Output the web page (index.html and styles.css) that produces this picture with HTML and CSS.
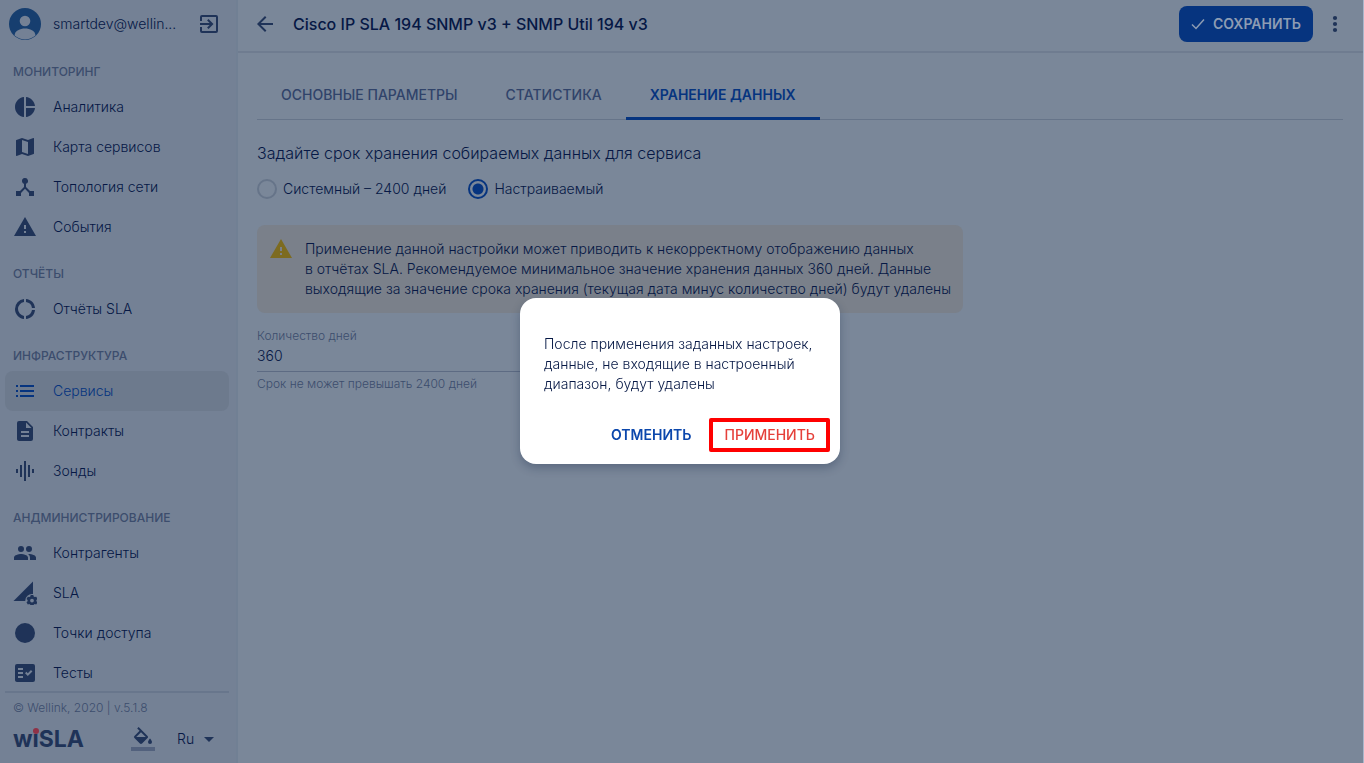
FILE: index.html
```html
<!DOCTYPE html>
<html lang="ru">
<head>
<meta charset="utf-8">
<title>wiSLA</title>
<link rel="stylesheet" href="styles.css">
</head>
<body>
<div class="app">
  <aside class="sidebar">
    <div class="user">
      <svg class="avatar" viewBox="0 0 32 32"><defs><clipPath id="disc"><circle cx="16" cy="16" r="16"/></clipPath></defs><circle cx="16" cy="16" r="16" fill="#163e6f"/><g clip-path="url(#disc)"><circle cx="16" cy="13" r="5.3" fill="#748195"/><path d="M5.500 27.500C6 22.500 11 20.500 16 20.500s10 2 10.500 7Q16 35.500 5.500 27.500z" fill="#748195"/></g></svg>
      <span class="user-name">smartdev@wellin...</span>
      <button class="icon-button" aria-label="Выйти"><svg class="icon" viewBox="0 0 24 24"><path d="M19 3H5a2 2 0 0 0-2 2v4h2V5h14v14H5v-4H3v4a2 2 0 0 0 2 2h14a2 2 0 0 0 2-2V5a2 2 0 0 0-2-2zM3 11v2h9.670l-2.580 2.590L11.500 17l5-5-5-5-1.410 1.410L12.670 11z"/></svg></button>
    </div>
    <nav class="nav">
      <h2 class="nav-title">МОНИТОРИНГ</h2>
      <a class="nav-item" href="#"><svg class="icon" viewBox="0 0 24 24"><path d="M11 2v20C5.900 21.500 2 17.200 2 12S5.900 2.500 11 2zm2 0v9h9c-.5-4.700-4.200-8.500-9-9zm0 11v9c4.700-.5 8.500-4.200 9-9z"/></svg>Аналитика</a>
      <a class="nav-item" href="#"><svg class="icon" viewBox="0 0 24 24"><path d="M20.500 3l-.16.03L15 5.100 9 3 3.360 4.900a.5.5 0 0 0-.36.480V20.500c0 .28.220.5.5.5l.16-.03L9 18.900l6 2.100 5.640-1.900a.5.5 0 0 0 .36-.480V3.500a.5.5 0 0 0-.5-.5zM15 19l-6-2.110V5l6 2.110z"/></svg>Карта сервисов</a>
      <a class="nav-item" href="#"><svg class="icon" viewBox="0 0 24 24"><path d="M17 16l-4-4V8.820A3 3 0 1 0 9 6c0 1.300.84 2.400 2 2.820V12l-4 4H3v5h5v-3.050l4-4.200 4 4.200V21h5v-5z"/></svg>Топология сети</a>
      <a class="nav-item" href="#"><svg class="icon" viewBox="0 0 24 24"><path d="M1 21h22L12 2zm12-3h-2v-2h2zm0-4h-2v-4h2z"/></svg>События</a>
      <h2 class="nav-title">ОТЧЁТЫ</h2>
      <a class="nav-item" href="#"><svg class="icon" viewBox="0 0 24 24"><path d="M11 5.080V2A10 10 0 0 0 2 12c0 5.200 3.950 9.450 9 10v-3.080A7 7 0 0 1 5 12a7 7 0 0 1 6-6.920zM18.970 11H22c-.47-5-4-8.530-9-9v3.080A7 7 0 0 1 18.970 11zM13 18.920V22c5-.47 8.530-4 9-9h-3.030A7 7 0 0 1 13 18.920z"/></svg>Отчёты SLA</a>
      <h2 class="nav-title">ИНФРАСТРУКТУРА</h2>
      <a class="nav-item nav-item-active" href="#" aria-current="page"><svg class="icon" viewBox="0 0 24 24"><path d="M3 13h2v-2H3zm0 5h2v-2H3zM3 8h2V6H3zm4 5h14v-2H7zm0 5h14v-2H7zM7 6v2h14V6z"/></svg>Сервисы</a>
      <a class="nav-item" href="#"><svg class="icon" viewBox="0 0 24 24"><path d="M14 2H6a2 2 0 0 0-2 2v16c0 1.100.9 2 2 2h12a2 2 0 0 0 2-2V8zm2 16H8v-2h8zm0-4H8v-2h8zm-3-5V3.500L18.500 9z"/></svg>Контракты</a>
      <a class="nav-item" href="#"><svg class="icon" viewBox="0 0 24 24"><path d="M7 18h2V6H7zm4 4h2V2h-2zm-8-8h2v-4H3zm12 4h2V6h-2zm4-8v4h2v-4z"/></svg>Зонды</a>
      <h2 class="nav-title">АНДМИНИСТРИРОВАНИЕ</h2>
      <a class="nav-item" href="#"><svg class="icon" viewBox="0 0 24 24"><path d="M16 11a3 3 0 1 0-3-3 3 3 0 0 0 3 3zm-8 0a3 3 0 1 0-3-3 3 3 0 0 0 3 3zm0 2c-2.330 0-7 1.170-7 3.500V19h14v-2.500C15 14.170 10.330 13 8 13zm8 0-.97.05C16.190 13.890 17 15.020 17 16.500V19h6v-2.500c0-2.330-4.670-3.500-7-3.500z"/></svg>Контрагенты</a>
      <a class="nav-item" href="#"><svg class="icon" viewBox="0 0 24 24"><path d="M20 .5v12.600A6.800 6.800 0 0 0 12.200 20H.5z"/><path fill-rule="evenodd" d="M17.700 14h2.600l.4 1.500 1 .6 1.500-.4 1.300 2.200-1.100 1.100v1.200l1.100 1.100-1.300 2.200-1.500-.4-1 .6-.4 1.500h-2.600l-.4-1.500-1-.6-1.500.4-1.300-2.200 1.100-1.100V19l-1.100-1.100 1.300-2.200 1.500.4 1-.6zM19 17.700a1.900 1.900 0 1 0 0 3.800 1.900 1.900 0 0 0 0-3.800z"/></svg>SLA</a>
      <a class="nav-item" href="#"><svg class="icon" viewBox="0 0 24 24"><circle cx="12" cy="12" r="10"/></svg>Точки доступа</a>
      <a class="nav-item" href="#"><svg class="icon" viewBox="0 0 24 24"><path fill-rule="evenodd" d="M20 3H4a2 2 0 0 0-2 2v14c0 1.100.9 2 2 2h16a2 2 0 0 0 2-2V5a2 2 0 0 0-2-2zM10 17H5v-2h5zm0-4H5v-2h5zm0-4H5V7h5zm4.820 6L12 12.160l1.410-1.410 1.410 1.420L17.990 9l1.420 1.420z"/></svg>Тесты</a>
    </nav>
    <footer class="footer">
      <p class="copyright">© Wellink, 2020 | v.5.1.8</p>
      <div class="footer-row">
        <span class="logo">w<span class="logo-i">i</span>SLA</span>
        <button class="fill-button" aria-label="Цвет темы"><svg class="icon" viewBox="0 0 24 24"><path d="M16.560 8.940L7.620 0 6.210 1.410l2.380 2.380-5.150 5.150a1.490 1.490 0 0 0 0 2.120l5.500 5.500c.29.290.68.440 1.060.44s.77-.15 1.060-.44l5.500-5.500c.59-.58.59-1.530 0-2.120zM5.210 10L10 5.210 14.790 10zM19 11.500s-2 2.170-2 3.500a2 2 0 0 0 4 0c0-1.330-2-3.500-2-3.500z"/><path d="M0 20h24v4H0z" fill="#52617d"/></svg></button>
        <button class="language">Ru<svg class="caret" viewBox="0 0 10 5"><path d="M0 0h10L5 5z"/></svg></button>
      </div>
    </footer>
  </aside>

  <main class="main">
    <header class="topbar">
      <button class="icon-button" aria-label="Назад"><svg class="icon" viewBox="0 0 24 24"><path d="M20 11H7.830l5.590-5.590L12 4l-8 8 8 8 1.410-1.410L7.830 13H20z"/></svg></button>
      <h1 class="title">Cisco IP SLA 194 SNMP v3 + SNMP Util 194 v3</h1>
      <button class="save"><svg class="check" viewBox="0 0 14 12"><path d="M1 6.500l4 4L13 1.500" fill="none" stroke="currentColor" stroke-width="1.500"/></svg>СОХРАНИТЬ</button>
      <button class="icon-button" aria-label="Ещё"><svg class="icon" viewBox="0 0 24 24"><circle cx="12" cy="6" r="2.100"/><circle cx="12" cy="12" r="2.100"/><circle cx="12" cy="18" r="2.100"/></svg></button>
    </header>
    <div class="content">
      <div class="tabs" role="tablist">
        <button class="tab" role="tab">ОСНОВНЫЕ ПАРАМЕТРЫ</button>
        <button class="tab" role="tab">СТАТИСТИКА</button>
        <button class="tab tab-active" role="tab" aria-selected="true">ХРАНЕНИЕ ДАННЫХ</button>
      </div>
      <h2 class="subtitle">Задайте срок хранения собираемых данных для сервиса</h2>
      <div class="options">
        <label class="option"><input class="radio" type="radio" name="term">Системный – 2400 дней</label>
        <label class="option"><input class="radio" type="radio" name="term" checked>Настраиваемый</label>
      </div>
      <div class="notice">
        <svg class="icon notice-icon" viewBox="0 0 24 24"><path d="M1 21h22L12 2zm12-3h-2v-2h2zm0-4h-2v-4h2z"/></svg>
        <p class="notice-text">Применение данной настройки может приводить к некорректному отображению данных<br>в отчётах SLA. Рекомендуемое минимальное значение хранения данных 360 дней. Данные<br>выходящие за значение срока хранения (текущая дата минус количество дней) будут удалены</p>
      </div>
      <div class="field">
        <label class="field-label" for="days">Количество дней</label>
        <input class="field-input" id="days" type="text" value="360">
        <p class="field-hint">Срок не может превышать 2400 дней</p>
      </div>
    </div>
  </main>
</div>

<div class="overlay">
  <section class="dialog" role="dialog" aria-modal="true" aria-describedby="dialog-text">
    <p class="dialog-text" id="dialog-text">После применения заданных настроек, данные, не входящие в настроенный диапазон, будут удалены</p>
    <div class="dialog-actions">
      <button class="dialog-button">ОТМЕНИТЬ</button>
      <button class="dialog-button dialog-button-apply">ПРИМЕНИТЬ</button>
    </div>
  </section>
</div>
</body>
</html>
```

FILE: styles.css
```css
* { box-sizing: border-box; }

body {
  margin: 0;
  background: #7a8799;
  color: #061845;
  font: 300 14px/20px Inter, "Noto Sans", sans-serif;
}

h1, h2, p { margin: 0; font-weight: inherit; }

button {
  margin: 0;
  padding: 0;
  border: 0;
  background: none;
  color: inherit;
  font: inherit;
  cursor: pointer;
}

.icon { display: block; flex: none; width: 24px; height: 24px; fill: #1f3358; }
.icon-button { flex: none; }

.app {
  display: flex;
  height: 100vh;
  border-right: 1px solid #a9b6ca;
}

.sidebar {
  display: flex;
  flex-direction: column;
  flex: none;
  width: 238px;
  padding: 0 7px 0 5px;
  border-right: 2px solid #718094;
  background: #748195;
}

.user {
  display: flex;
  align-items: center;
  padding: 8px 8px 6px 4px;
}
.avatar { flex: none; width: 32px; height: 32px; }
.user-name { flex: 1; margin-left: 12px; }

.nav { flex: 1; min-height: 0; overflow: hidden; }
.nav-title {
  margin: 19px 8px 7px;
  color: #3c4d6d;
  font-size: 12px;
  font-weight: 500;
  line-height: 16px;
}
.nav-title:first-child { margin-top: 18px; }
.nav-item {
  display: flex;
  align-items: center;
  gap: 16px;
  height: 40px;
  padding: 0 8px;
  border-radius: 8px;
  color: inherit;
  text-decoration: none;
}
.nav-item-active { background: #6d7a8d; color: #06347f; }
.nav-item-active .icon { fill: #06347f; }

.footer { border-top: 2px solid #68768c; padding: 6px 8px 5px; }
.copyright { color: #3c4d6d; font-size: 12px; line-height: 18px; }
.footer-row { display: flex; align-items: center; height: 38px; margin-top: 3px; }
.logo {
  width: 118px;
  color: #1f3358;
  font-size: 23px;
  font-weight: 700;
  line-height: 24px;
}
.logo-i { position: relative; }
.logo-i::after {
  content: "";
  position: absolute;
  left: 0;
  top: 3px;
  width: 6px;
  height: 6px;
  border-radius: 50%;
  background: #8f3247;
}
.fill-button { margin-right: 22px; }
.language { display: flex; align-items: center; gap: 10px; }
.caret { width: 10px; height: 5px; fill: #1f3358; }

.main { flex: 1; min-width: 0; }
.topbar {
  display: flex;
  align-items: center;
  height: 53px;
  padding: 0 16px 3px 15px;
  border-bottom: 2px solid #6f7c90;
}
.title { flex: 1; margin-left: 16px; font-size: 16px; font-weight: 500; }
.save {
  display: flex;
  align-items: center;
  gap: 8px;
  height: 36px;
  margin-right: 10px;
  padding: 0 12px;
  border-radius: 8px;
  background: #06347f;
  color: #8d9cb3;
  font-weight: 600;
}
.check { width: 14px; height: 12px; }

.content { padding: 18px 20px 0 19px; }
.tabs { display: flex; border-bottom: 1px solid #667489; }
.tab {
  height: 49px;
  margin-bottom: -1px;
  padding: 1px 24px 0;
  border-bottom: 3px solid transparent;
  color: #30436a;
  font-weight: 500;
}
.tab-active { border-color: #06347f; color: #06347f; font-weight: 600; }

.subtitle { margin-top: 23px; font-size: 16px; }
.options { display: flex; gap: 22px; margin-top: 16px; }
.option { display: flex; align-items: center; gap: 6px; }
.radio {
  appearance: none;
  width: 20px;
  height: 20px;
  margin: 0;
  border: 2px solid #667489;
  border-radius: 50%;
}
.radio:checked {
  border-color: #06347f;
  background: radial-gradient(circle, #06347f 5px, transparent 6px);
}

.notice {
  display: flex;
  gap: 12px;
  width: fit-content;
  margin-top: 26px;
  padding: 14px 12px;
  border-radius: 8px;
  background: #7a808a;
}
.notice-icon { margin-top: -2px; fill: #7d6b20; }

.field { width: 320px; margin-top: 15px; }
.field-label, .field-hint { color: #3c4d6d; font-size: 12px; line-height: 16px; }
.field-label { display: block; }
.field-input {
  display: block;
  width: 100%;
  height: 28px;
  margin-bottom: 4px;
  padding: 0 0 4px;
  border: 0;
  border-bottom: 1px solid #5d6b83;
  outline: 0;
  background: none;
  color: inherit;
  font: inherit;
}

.overlay {
  position: fixed;
  inset: 0;
  display: flex;
  align-items: center;
  justify-content: center;
  padding: 0 4px 2px 0;
}
.dialog {
  width: 320px;
  padding: 36px 10px 12px 24px;
  border-radius: 16px;
  background: #fff;
  box-shadow: 0 4px 10px rgba(20, 35, 70, .3);
}
.dialog-actions { display: flex; justify-content: flex-end; gap: 18px; margin-top: 24px; }
.dialog-button { color: #0b47ac; font-weight: 600; }
.dialog-button-apply {
  height: 34px;
  padding: 0 11px;
  border: 4px solid #f00;
  border-radius: 2px;
  color: #e5403a;
  font-weight: 500;
}
```
